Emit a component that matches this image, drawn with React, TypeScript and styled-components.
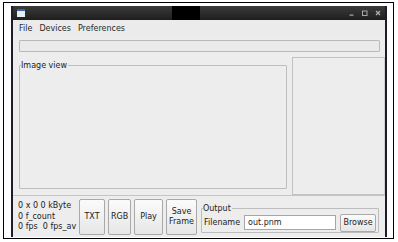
import styled, { createGlobalStyle } from "styled-components";

const GlobalStyle = createGlobalStyle`
  html, body {
    margin: 0;
    padding: 0;
    background: #ffffff;
  }
  body {
    font-family: "DejaVu Sans", "Liberation Sans", sans-serif;
    font-size: 8px;
    color: #222222;
  }
`;

const Frame = styled.div`
  box-sizing: border-box;
  margin: 2px 0 0 3px;
  width: 391px;
  height: 237px;
  border: 1px solid #000;
  padding: 3px 6px 1px 7px;
`;

const Window = styled.div`
  box-sizing: border-box;
  width: 376px;
  height: 231px;
  display: flex;
  flex-direction: column;
  border-left: 2px solid #1b1d2b;
  border-right: 2px solid #1b1d2b;
  background: #ededed;
`;

const TitleBar = styled.div`
  height: 14px;
  display: flex;
  align-items: center;
  background: linear-gradient(#3b3b3b, #1e1e1e);
`;

const AppIcon = styled.div`
  margin-left: 4px;
  width: 8px;
  height: 6px;
  background: #e8eef8;
  border-top: 2px solid #3c64b4;
`;

const DarkBlock = styled.div`
  margin-left: 147px;
  width: 28px;
  height: 14px;
  background: #000;
`;

const WinButtons = styled.div`
  margin-left: auto;
  margin-right: 4px;
  display: flex;
  gap: 7px;
  align-items: center;
`;

const MenuBar = styled.div`
  height: 16px;
  display: flex;
  align-items: center;
  gap: 7px;
  padding-left: 6px;
  background: #ebebeb;
`;

const MenuItem = styled.span`
  color: #2a2a2a;
`;

const Progress = styled.div`
  box-sizing: border-box;
  margin: 4px 5px 0 6px;
  height: 12px;
  border: 1px solid #b9b9b9;
  border-radius: 1px;
  background: #eaeaea;
`;

const MainRow = styled.div`
  height: 143px;
  display: flex;
  align-items: flex-start;
  gap: 5px;
  padding-left: 6px;
`;

const Group = styled.fieldset<{ $w: number; $h: number; $top: number; $left?: number }>`
  box-sizing: border-box;
  margin: ${(p) => p.$top}px 0 0 ${(p) => p.$left ?? 0}px;
  padding: 0;
  min-width: 0;
  width: ${(p) => p.$w}px;
  height: ${(p) => p.$h}px;
  border: 1px solid #bdbdbd;
  border-radius: 1px;
  legend {
    margin-left: 1px;
    padding: 0 1px 0 0;
    font-size: 8px;
    line-height: 9px;
    color: #222;
  }
`;

const SidePanel = styled.div`
  box-sizing: border-box;
  margin-top: 5px;
  width: 93px;
  height: 138px;
  border: 1px solid #c2c2c2;
  border-right-color: #d0d0d0;
`;

const BottomBar = styled.div`
  box-sizing: border-box;
  height: 41px;
  border-top: 1px solid #c4c4c4;
  display: flex;
  align-items: flex-start;
  padding: 3px 0 0 5px;
`;

const Stats = styled.div`
  width: 61px;
  padding-top: 2px;
  line-height: 10.5px;
  white-space: pre;
`;

const Buttons = styled.div`
  display: flex;
  gap: 3px;
`;

const Button = styled.button<{ $w: number; $h: number }>`
  box-sizing: border-box;
  width: ${(p) => p.$w}px;
  height: ${(p) => p.$h}px;
  padding: 0;
  margin: 0;
  border: 1px solid #a9a9a9;
  border-radius: 2px;
  background: linear-gradient(#fbfbfb, #e6e6e6);
  font-family: "DejaVu Sans", "Liberation Sans", sans-serif;
  font-size: 8px;
  line-height: 10px;
  color: #222;
`;

const OutputRow = styled.div`
  display: flex;
  align-items: center;
  padding: 0 2px;
  height: 19px;
`;

const Label = styled.span`
  width: 40px;
`;

const Input = styled.div`
  box-sizing: border-box;
  width: 92px;
  height: 15px;
  border: 1px solid #a6a6a6;
  background: #fff;
  padding-left: 3px;
  line-height: 13px;
  margin-right: 4px;
`;

export default function App() {
  return (
    <>
      <GlobalStyle />
      <Frame>
        <Window>
          <TitleBar>
            <AppIcon />
            <DarkBlock />
            <WinButtons>
              <svg width="6" height="6" viewBox="0 0 6 6">
                <rect x="0.5" y="4.5" width="4" height="1.2" fill="#a8a8a8" />
              </svg>
              <svg width="6" height="6" viewBox="0 0 6 6">
                <rect x="0.5" y="1" width="4.5" height="4.5" fill="none" stroke="#a8a8a8" strokeWidth="1" />
              </svg>
              <svg width="6" height="6" viewBox="0 0 6 6">
                <path d="M1 1 L5 5 M5 1 L1 5" stroke="#b0b0b0" strokeWidth="1.3" />
              </svg>
            </WinButtons>
          </TitleBar>
          <MenuBar>
            <MenuItem>File</MenuItem>
            <MenuItem>Devices</MenuItem>
            <MenuItem>Preferences</MenuItem>
          </MenuBar>
          <Progress />
          <MainRow>
            <Group $w={269} $h={128} $top={9}>
              <legend>Image view</legend>
            </Group>
            <SidePanel />
          </MainRow>
          <BottomBar>
            <Stats>{"0 x 0 0 kByte\n0 f_count\n0 fps  0 fps_av"}</Stats>
            <Buttons>
              <Button $w={26} $h={36}>TXT</Button>
              <Button $w={23} $h={36}>RGB</Button>
              <Button $w={29} $h={36}>Play</Button>
              <Button $w={31} $h={36}>Save<br />Frame</Button>
            </Buttons>
            <Group $w={178} $h={29} $top={5} $left={4}>
              <legend>Output</legend>
              <OutputRow>
                <Label>Filename</Label>
                <Input>out.pnm</Input>
                <Button $w={36} $h={18}>Browse</Button>
              </OutputRow>
            </Group>
          </BottomBar>
        </Window>
      </Frame>
    </>
  );
}
